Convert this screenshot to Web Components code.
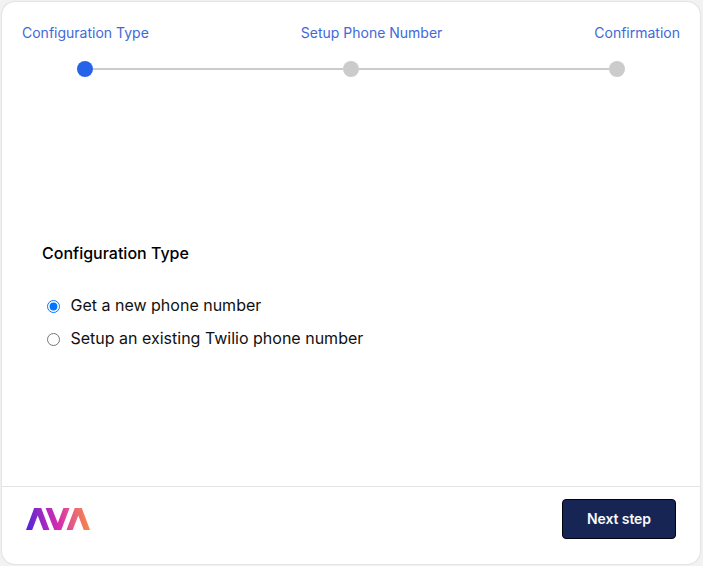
<!DOCTYPE html>
<html lang="en">
<head>
<meta charset="utf-8">
<title>Setup Phone Number</title>
<style>
  body {
    margin: 0;
    height: 566px;
    padding: 2px 3px 2px 2px;
    box-sizing: border-box;
    overflow: hidden;
    background: #f2f2f3;
    font-family: Inter, "Liberation Sans", sans-serif;
    color: #111;
  }
</style>
</head>
<body>
<wizard-card>
  <step-progress slot="header">
    <step-item active>Configuration Type</step-item>
    <step-item>Setup Phone Number</step-item>
    <step-item>Confirmation</step-item>
  </step-progress>
  <option-group heading="Configuration Type">
    <radio-option checked>Get a new phone number</radio-option>
    <radio-option>Setup an existing Twilio phone number</radio-option>
  </option-group>
  <ava-logo slot="footer"></ava-logo>
  <primary-button slot="footer">Next step</primary-button>
</wizard-card>

<script>
class WizardCard extends HTMLElement {
  constructor() {
    super();
    this.attachShadow({ mode: 'open' });
    this.shadowRoot.innerHTML = `
      <style>
        :host {
          display: flex;
          flex-direction: column;
          box-sizing: border-box;
          height: 100%;
          background: #fff;
          border-radius: 13px;
          box-shadow: 0 0 2px rgba(0, 0, 0, 0.2);
        }
        header {
          padding: 21px 20px 0;
        }
        main {
          flex: 1;
          display: flex;
          flex-direction: column;
          justify-content: center;
          padding: 29px 40px 0;
        }
        footer {
          display: flex;
          justify-content: space-between;
          align-items: flex-start;
          box-sizing: border-box;
          height: 78px;
          padding: 12px 24px 0;
          border-top: 1px solid #e4e4e6;
        }
      </style>
      <header><slot name="header"></slot></header>
      <main><slot></slot></main>
      <footer><slot name="footer"></slot></footer>
    `;
  }
}

class StepProgress extends HTMLElement {
  constructor() {
    super();
    this.attachShadow({ mode: 'open' });
    this.shadowRoot.innerHTML = `
      <style>
        :host {
          display: block;
        }
        .labels {
          display: flex;
          justify-content: space-between;
        }
        .track {
          display: flex;
          align-items: center;
          padding: 0 55px;
          margin-top: 18px;
        }
        .dot {
          width: 16px;
          height: 16px;
          border-radius: 50%;
          background: #cbcbcb;
        }
        .dot.active {
          background: #2563eb;
        }
        .line {
          flex: 1;
          height: 2px;
          background: #cbcbcb;
        }
      </style>
      <div class="labels"><slot></slot></div>
      <div class="track"></div>
    `;
  }

  connectedCallback() {
    const steps = [...this.querySelectorAll('step-item')];
    this.shadowRoot.querySelector('.track').innerHTML = steps
      .map(step => `<span class="dot${step.hasAttribute('active') ? ' active' : ''}"></span>`)
      .join('<span class="line"></span>');
  }
}

class StepItem extends HTMLElement {
  constructor() {
    super();
    this.attachShadow({ mode: 'open' });
    this.shadowRoot.innerHTML = `
      <style>
        :host {
          display: block;
          font-size: 14px;
          line-height: 20px;
          color: #4169d8;
          white-space: nowrap;
        }
      </style>
      <slot></slot>
    `;
  }
}

class OptionGroup extends HTMLElement {
  constructor() {
    super();
    this.attachShadow({ mode: 'open' });
    this.shadowRoot.innerHTML = `
      <style>
        :host {
          display: block;
        }
        h2 {
          margin: 0 0 26px;
          font-size: 16px;
          line-height: 24px;
          font-weight: 500;
          color: #000;
        }
        .options {
          display: grid;
          gap: 5px;
        }
      </style>
      <h2></h2>
      <div class="options"><slot></slot></div>
    `;
  }

  connectedCallback() {
    this.shadowRoot.querySelector('h2').textContent = this.getAttribute('heading');
  }
}

class RadioOption extends HTMLElement {
  constructor() {
    super();
    this.attachShadow({ mode: 'open' });
    this.shadowRoot.innerHTML = `
      <style>
        :host {
          display: block;
        }
        label {
          display: flex;
          align-items: center;
          font-size: 16px;
          line-height: 28px;
        }
        input {
          width: 13px;
          height: 13px;
          margin: 3px 10.5px 0 5px;
        }
      </style>
      <label><input type="radio"><span><slot></slot></span></label>
    `;
    this._input = this.shadowRoot.querySelector('input');
    this._input.addEventListener('change', this._select.bind(this));
  }

  connectedCallback() {
    this._input.checked = this.hasAttribute('checked');
  }

  // radios in separate shadow roots do not share a group
  _select() {
    this.parentElement.querySelectorAll('radio-option').forEach(option => {
      option._input.checked = option === this;
    });
  }
}

class AvaLogo extends HTMLElement {
  constructor() {
    super();
    this.attachShadow({ mode: 'open' });
    this.shadowRoot.innerHTML = `
      <style>
        :host {
          display: block;
          padding-top: 9px;
        }
        svg {
          display: block;
        }
      </style>
      <svg width="64" height="22" viewBox="0 0 64 22">
        <defs>
          <linearGradient id="fill" gradientUnits="userSpaceOnUse" x1="0" y1="16" x2="64" y2="8">
            <stop offset="0" stop-color="#4b27d8"/>
            <stop offset="0.22" stop-color="#9229c4"/>
            <stop offset="0.5" stop-color="#d52bb0"/>
            <stop offset="0.75" stop-color="#e8627f"/>
            <stop offset="1" stop-color="#f88c40"/>
          </linearGradient>
        </defs>
        <g fill="url(#fill)">
          <path d="M0 22 8.200 0h7L23.500 22h-6.200L11.700 7.500 6.200 22z"/>
          <path d="M19.600 0h6.200l6 15L37.400 0h6.200L35.300 22h-7z"/>
          <path d="M40.500 22 48.800 0h7L64 22h-6.200L52.300 7.500 46.700 22z"/>
        </g>
      </svg>
    `;
  }
}

class PrimaryButton extends HTMLElement {
  constructor() {
    super();
    this.attachShadow({ mode: 'open' });
    this.shadowRoot.innerHTML = `
      <style>
        :host {
          display: block;
        }
        button {
          display: block;
          box-sizing: border-box;
          width: 114px;
          height: 40px;
          padding: 0;
          border: 1px solid #02040c;
          border-radius: 4px;
          background: #172554;
          color: #f8fafc;
          font: 600 14px/20px Inter, "Liberation Sans", sans-serif;
          letter-spacing: -0.1px;
        }
      </style>
      <button type="button"><slot></slot></button>
    `;
  }
}

customElements.define('wizard-card', WizardCard);
customElements.define('step-progress', StepProgress);
customElements.define('step-item', StepItem);
customElements.define('option-group', OptionGroup);
customElements.define('radio-option', RadioOption);
customElements.define('ava-logo', AvaLogo);
customElements.define('primary-button', PrimaryButton);
</script>
</body>
</html>
